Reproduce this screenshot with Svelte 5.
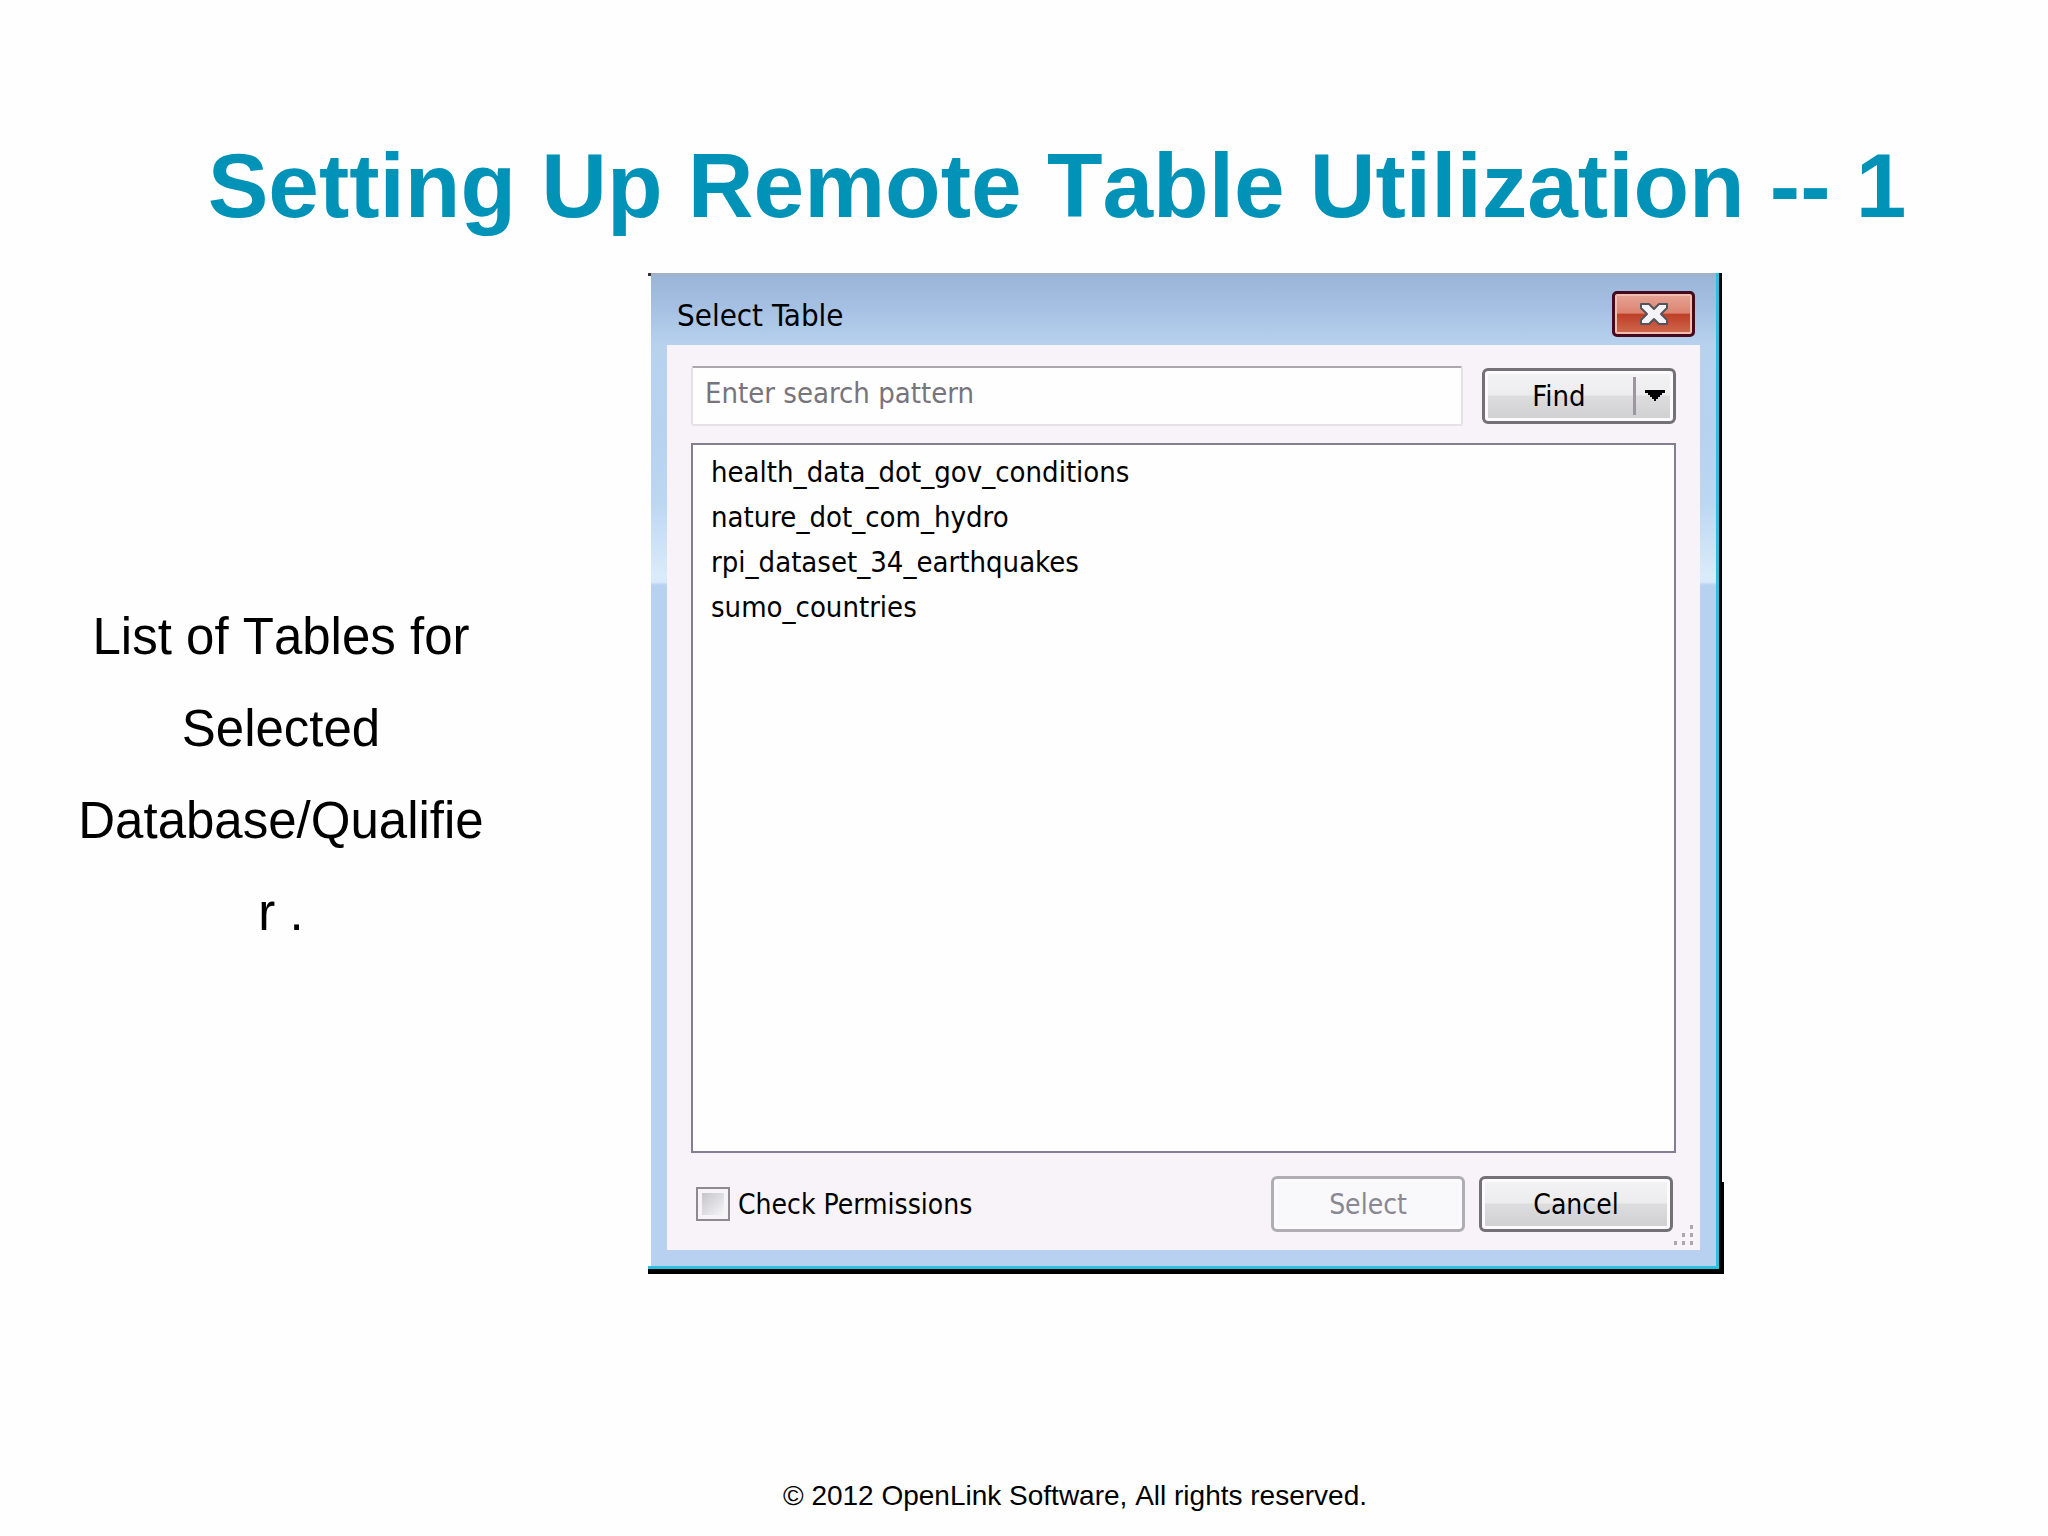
<script>
  const caption = ['List of Tables for', 'Selected', 'Database/Qualifie', 'r .'];
  const tables = [
    'health_data_dot_gov_conditions',
    'nature_dot_com_hydro',
    'rpi_dataset_34_earthquakes',
    'sumo_countries'
  ];
  const grip = [[16, 0], [8, 8], [16, 8], [0, 16], [8, 16], [16, 16]];
</script>

<main class="slide">
  <h1>Setting Up Remote Table Utilization -- 1</h1>

  <div class="content">
    <p class="caption">
      {#each caption as line}<span>{line}</span>{/each}
    </p>

    <div class="shadow">
      <div class="edge">
        <section class="dialog" aria-labelledby="dialog-title">
          <header class="titlebar">
            <h2 id="dialog-title">Select Table</h2>
            <button class="close" type="button" aria-label="Close">
              <svg width="30" height="24" viewBox="0 0 30 24" aria-hidden="true">
                <path d="M2 2h8l5 5 5-5h8v4l-6 6 6 6v4h-8l-5-5-5 5H2v-4l6-6-6-6z" fill="#f4f4f6" stroke="#54545c" stroke-width="2" stroke-linejoin="round" />
              </svg>
            </button>
          </header>

          <form class="client" onsubmit={(e) => e.preventDefault()}>
            <div class="search">
              <input class="field" type="text" placeholder="Enter search pattern" aria-label="Search pattern" />
              <div class="split">
                <button class="find" type="submit">Find</button>
                <button class="more" type="button" aria-label="Find options">
                  <svg width="20" height="12" viewBox="0 0 20 12" aria-hidden="true">
                    <path d="M0 0h20v3h-3v2h-2v2h-2v2h-2v2H9V9H7V7H5V5H3V3H0z" fill="#000" />
                  </svg>
                </button>
              </div>
            </div>

            <ul class="list">
              {#each tables as table}<li>{table}</li>{/each}
            </ul>

            <div class="actions">
              <label class="check"><input type="checkbox" />Check Permissions</label>
              <button class="push" type="button" disabled>Select</button>
              <button class="push" type="button">Cancel</button>
            </div>

            <svg class="grip" width="20" height="20" viewBox="0 0 20 20" aria-hidden="true">
              {#each grip as [x, y]}
                <rect {x} {y} width="3" height="4" fill="#aaa6ae" />
              {/each}
            </svg>
          </form>
        </section>
      </div>
    </div>
  </div>

  <footer>© 2012 OpenLink Software, All rights reserved.</footer>
</main>

<style>
  :global(body) {
    background: #fefefe;
  }
  .slide {
    box-sizing: border-box;
    min-height: 100vh;
    display: flex;
    flex-direction: column;
    padding: 130px 0 20px;
    font-family: 'Liberation Sans', Arial, sans-serif;
    color: #000;
  }
  h1 {
    margin: 0 0 31px;
    padding-left: 66px;
    text-align: center;
    font-size: 91px;
    line-height: 112px;
    font-weight: 700;
    font-kerning: none;
    color: #0093b7;
  }
  .content {
    display: grid;
    grid-template-columns: 648fr 1074fr 326fr;
    align-items: start;
  }
  .caption {
    margin: 318px 86px 0 0;
    display: flex;
    flex-direction: column;
    align-items: center;
    font-size: 51px;
    line-height: 92px;
    font-kerning: none;
  }
  .shadow {
    position: relative;
    border: solid #000;
    border-width: 0 3px 5px 0;
  }
  .shadow::before {
    content: '';
    position: absolute;
    top: 0;
    left: 0;
    width: 3px;
    height: 3px;
    background: #333;
  }
  .shadow::after {
    content: '';
    position: absolute;
    right: -5px;
    bottom: -5px;
    width: 2px;
    height: 92px;
    background: #000;
  }
  .edge {
    padding-left: 3px;
    border: solid #2cc0dc;
    border-width: 0 3px 3px 0;
  }
  .dialog {
    padding: 0 16px 16px;
    background: linear-gradient(#a3b0c8 0, #9ab6d9 6px, #a4bfe2 32px, #b8d2ee 74px, #b8d1ef 160px, #bdd7f2 230px, #d9eaf9 300px, #d9eaf9 309px, #b9d1f0 312px);
    font-family: 'DejaVu Sans Condensed', 'DejaVu Sans', Tahoma, sans-serif;
    font-size: 29px;
  }
  .titlebar {
    height: 72px;
    display: flex;
    align-items: center;
    justify-content: space-between;
    padding: 0 5px 0 10px;
  }
  h2 {
    margin: 12px 0 0;
    font-size: 31px;
    line-height: 36px;
    font-weight: 400;
  }
  button,
  input {
    box-sizing: border-box;
    margin: 0;
    font: inherit;
    color: inherit;
  }
  button {
    padding: 0;
  }
  .close {
    width: 83px;
    height: 46px;
    margin-top: 10px;
    display: grid;
    place-items: center;
    border: 3px solid #460a1c;
    border-radius: 5px;
    background: linear-gradient(#e6a596, #dc8470 48%, #bd3f26 50%, #cf6a50);
    box-shadow: inset 0 0 0 2px #f1bdb0;
  }
  .client {
    position: relative;
    padding: 21px 24px 18px;
    background: #f7f3f8;
  }
  .search {
    display: flex;
    align-items: center;
    gap: 19px;
  }
  .field {
    flex: 1;
    min-width: 0;
    height: 60px;
    padding: 0 12px 6px;
    border: 2px solid #e4e1e7;
    border-top-color: #aaa8ae;
    border-radius: 3px;
    background: #fefefe;
  }
  .field::placeholder {
    color: #77747c;
    opacity: 1;
  }
  .split,
  .push {
    box-sizing: border-box;
    width: 194px;
    height: 56px;
    border: 3px solid #757078;
    border-radius: 6px;
    background: linear-gradient(#f4f2f5, #ececee 48%, #dddde0 50%, #cfcfd2);
    box-shadow: inset 0 0 0 3px #fbfafc;
  }
  .split {
    display: flex;
    align-items: center;
  }
  .find,
  .more {
    border: 0;
    background: none;
  }
  .find {
    flex: 1;
    height: 38px;
    border-right: 3px solid #9a989e;
  }
  .more {
    width: 37px;
    height: 38px;
    display: grid;
    place-items: center;
  }
  .list {
    box-sizing: border-box;
    height: 710px;
    margin: 17px 0 23px;
    padding: 5px 18px;
    border: 2px solid #827f92;
    background: #fefefe;
    list-style: none;
    line-height: 45px;
  }
  .actions {
    display: flex;
    align-items: center;
    gap: 14px;
    padding: 0 3px 0 5px;
    font-size: 28px;
  }
  .check {
    margin-right: auto;
    display: flex;
    align-items: center;
    gap: 8px;
  }
  .check input {
    appearance: none;
    width: 34px;
    height: 34px;
    border: 2px solid #8c8a90;
    background: linear-gradient(135deg, #c4c4ca, #f6f6f8) content-box;
    padding: 4px;
    background-color: #fbfbfc;
  }
  .push:disabled {
    border-color: #b0aeb3;
    background: #f9f9fb;
    color: #8a8892;
  }
  .grip {
    position: absolute;
    right: 6px;
    bottom: 5px;
  }
  footer {
    margin-top: auto;
    padding-left: 102px;
    text-align: center;
    font-size: 28px;
    line-height: 40px;
    font-kerning: none;
  }
</style>
